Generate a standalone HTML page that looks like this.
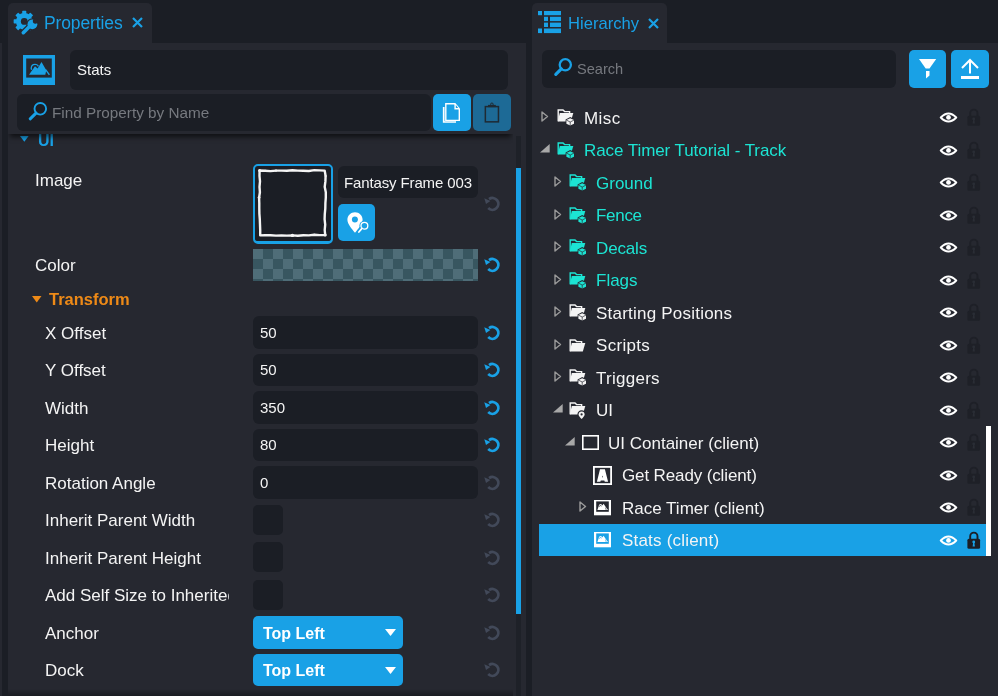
<!DOCTYPE html>
<html><head><meta charset="utf-8">
<style>
*{box-sizing:border-box;margin:0;padding:0}
html,body{width:998px;height:696px;overflow:hidden;background:#1b1e25;font-family:"Liberation Sans",sans-serif;color:#f4f4f4}
.a{position:absolute}
.t{position:absolute;white-space:nowrap;will-change:transform}
svg{overflow:visible}
</style></head><body>
<div class="a" style="left:0px;top:43px;width:1.5px;height:653px;background:#262830;border-radius:0px;"></div>
<div class="a" style="left:8px;top:3px;width:144px;height:41px;background:#262830;border-radius:0px;border-radius:5px 5px 0 0"></div>
<div class="a" style="left:8px;top:43px;width:518px;height:653px;background:#262830;border-radius:0px;"></div>
<svg class="a" style="left:20px;top:136.4px;" width="8.6" height="5.8" viewBox="0 0 8.6 5.8"><path d="M0 0 H8.6 L4.3 5.8 Z" fill="#19a1e6"/></svg>
<div class="t" style="left:37.8px;top:131.02px;font-size:16px;line-height:19px;color:#19a1e6;font-weight:700;">UI</div>
<div class="t" style="left:35px;top:170.52px;font-size:17px;line-height:20px;color:#f4f4f4;font-weight:400;">Image</div>
<div class="a" style="left:253px;top:164px;width:80px;height:80px;background:#1b1e25;border-radius:5px;border:2px solid #19a1e6;border-bottom-width:3px"></div>
<svg class="a" style="left:258px;top:169px;" width="70" height="69" viewBox="0 0 70 69"><path d="M1.6 1.5 L7.1 1.7 L12.5 2.1 L18.0 1.6 L23.5 1.6 L28.9 1.7 L34.4 1.2 L39.9 1.6 L45.3 1.8 L50.8 2.0 L56.3 1.1 L61.7 1.4 L66.7 1.6 L67.6 7.0 L67.4 12.4 L66.7 17.8 L67.8 23.2 L67.8 28.6 L67.4 34.0 L67.3 39.4 L66.8 44.8 L66.6 50.2 L67.2 55.6 L66.7 61.0 L67.2 66.0 L61.7 66.1 L56.3 65.8 L50.8 66.4 L45.3 66.3 L39.9 66.8 L34.4 66.4 L28.9 66.6 L23.5 66.4 L18.0 66.6 L12.5 66.3 L7.1 66.1 L2.2 66.4 L2.2 61.0 L2.0 55.6 L1.8 50.2 L1.4 44.8 L1.3 39.4 L1.3 34.0 L1.1 28.6 L1.9 23.2 L1.5 17.8 L2.0 12.4 L1.5 7.0 Z" fill="none" stroke="#f4f4f4" stroke-width="2.4" stroke-linejoin="round"/><circle cx="7.1" cy="1.7" r="1.0" fill="#f4f4f4"/><circle cx="1.1" cy="28.6" r="1.4" fill="#f4f4f4"/><circle cx="1.6" cy="1.5" r="1.5" fill="#f4f4f4"/><circle cx="67.6" cy="7.0" r="1.1" fill="#f4f4f4"/><circle cx="1.9" cy="23.2" r="1.0" fill="#f4f4f4"/><circle cx="18.0" cy="1.6" r="1.2" fill="#f4f4f4"/><circle cx="34.4" cy="66.4" r="1.7" fill="#f4f4f4"/><circle cx="67.2" cy="66.0" r="1.5" fill="#f4f4f4"/><circle cx="61.7" cy="66.1" r="1.0" fill="#f4f4f4"/><circle cx="56.3" cy="65.8" r="1.1" fill="#f4f4f4"/></svg>
<div class="a" style="left:338px;top:166px;width:140px;height:32px;background:#1b1e25;border-radius:6px;"></div>
<div class="t" style="left:344px;top:173.52px;font-size:15px;line-height:18px;color:#f4f4f4;font-weight:400;letter-spacing:-0.13px">Fantasy Frame 003</div>
<div class="a" style="left:338px;top:204px;width:37px;height:37px;background:#19a1e6;border-radius:5px;"></div>
<svg class="a" style="left:338px;top:204px;" width="37" height="37" viewBox="0 0 37 37"><path d="M17 8.3 C12.8 8.3 9.4 11.6 9.4 15.8 C9.4 20 13.6 24.6 17 28.8 C20.4 24.6 24.6 20 24.6 15.8 C24.6 11.6 21.2 8.3 17 8.3 Z" fill="#fff"/><circle cx="16.9" cy="15.5" r="3" fill="#19a1e6"/><circle cx="26.4" cy="21.8" r="5" fill="#19a1e6"/><circle cx="26.4" cy="21.8" r="3.4" fill="none" stroke="#fff" stroke-width="1.3"/><path d="M24 24.4 L20.6 28.3" stroke="#19a1e6" stroke-width="3.4"/><path d="M24 24.4 L20.9 28" stroke="#fff" stroke-width="1.7" stroke-linecap="round"/></svg>
<svg class="a" style="left:484.3px;top:196px;" width="16" height="16" viewBox="0 0 16 16"><path d="M4.23 12.07 A5.9 5.9 0 1 0 5.02 3.07" fill="none" stroke="#424959" stroke-width="2.8"/><path d="M0.3 2.3 L6.4 4.9 L2.0 7.9 Z" fill="#424959"/></svg>
<div class="t" style="left:35px;top:255.52px;font-size:17px;line-height:20px;color:#f4f4f4;font-weight:400;">Color</div>
<div class="a" style="left:253px;top:249px;width:225px;height:32px;background:repeating-conic-gradient(#385660 0% 25%, #4f6d78 0% 50%) 0 0/20px 20px;border-radius:0px;"></div>
<svg class="a" style="left:484.3px;top:256.7px;" width="16" height="16" viewBox="0 0 16 16"><path d="M4.23 12.07 A5.9 5.9 0 1 0 5.02 3.07" fill="none" stroke="#19a1e6" stroke-width="2.8"/><path d="M0.3 2.3 L6.4 4.9 L2.0 7.9 Z" fill="#19a1e6"/></svg>
<svg class="a" style="left:32px;top:296px;" width="9.5" height="6.5" viewBox="0 0 9.5 6.5"><path d="M0 0 H9.5 L4.75 6.5 Z" fill="#ee8a17"/></svg>
<div class="t" style="left:48.5px;top:289.02px;font-size:16.5px;line-height:20px;color:#ee8a17;font-weight:700;">Transform</div>
<div class="a" style="left:253px;top:316.0px;width:225px;height:32.5px;background:#1b1e25;border-radius:6px;"></div>
<div class="t" style="left:260px;top:323.52px;font-size:15px;line-height:18px;color:#f4f4f4;font-weight:400;">50</div>
<svg class="a" style="left:484.3px;top:324.5px;" width="16" height="16" viewBox="0 0 16 16"><path d="M4.23 12.07 A5.9 5.9 0 1 0 5.02 3.07" fill="none" stroke="#19a1e6" stroke-width="2.8"/><path d="M0.3 2.3 L6.4 4.9 L2.0 7.9 Z" fill="#19a1e6"/></svg>
<div class="a" style="left:253px;top:353.5px;width:225px;height:32.5px;background:#1b1e25;border-radius:6px;"></div>
<div class="t" style="left:260px;top:360.52px;font-size:15px;line-height:18px;color:#f4f4f4;font-weight:400;">50</div>
<svg class="a" style="left:484.3px;top:362.0px;" width="16" height="16" viewBox="0 0 16 16"><path d="M4.23 12.07 A5.9 5.9 0 1 0 5.02 3.07" fill="none" stroke="#19a1e6" stroke-width="2.8"/><path d="M0.3 2.3 L6.4 4.9 L2.0 7.9 Z" fill="#19a1e6"/></svg>
<div class="a" style="left:253px;top:391.0px;width:225px;height:32.5px;background:#1b1e25;border-radius:6px;"></div>
<div class="t" style="left:260px;top:398.52px;font-size:15px;line-height:18px;color:#f4f4f4;font-weight:400;">350</div>
<svg class="a" style="left:484.3px;top:399.5px;" width="16" height="16" viewBox="0 0 16 16"><path d="M4.23 12.07 A5.9 5.9 0 1 0 5.02 3.07" fill="none" stroke="#19a1e6" stroke-width="2.8"/><path d="M0.3 2.3 L6.4 4.9 L2.0 7.9 Z" fill="#19a1e6"/></svg>
<div class="a" style="left:253px;top:428.5px;width:225px;height:32.5px;background:#1b1e25;border-radius:6px;"></div>
<div class="t" style="left:260px;top:435.52px;font-size:15px;line-height:18px;color:#f4f4f4;font-weight:400;">80</div>
<svg class="a" style="left:484.3px;top:437.0px;" width="16" height="16" viewBox="0 0 16 16"><path d="M4.23 12.07 A5.9 5.9 0 1 0 5.02 3.07" fill="none" stroke="#19a1e6" stroke-width="2.8"/><path d="M0.3 2.3 L6.4 4.9 L2.0 7.9 Z" fill="#19a1e6"/></svg>
<div class="a" style="left:253px;top:466.0px;width:225px;height:32.5px;background:#1b1e25;border-radius:6px;"></div>
<div class="t" style="left:260px;top:473.52px;font-size:15px;line-height:18px;color:#f4f4f4;font-weight:400;">0</div>
<svg class="a" style="left:484.3px;top:474.5px;" width="16" height="16" viewBox="0 0 16 16"><path d="M4.23 12.07 A5.9 5.9 0 1 0 5.02 3.07" fill="none" stroke="#424959" stroke-width="2.8"/><path d="M0.3 2.3 L6.4 4.9 L2.0 7.9 Z" fill="#424959"/></svg>
<div class="a" style="left:253px;top:504.5px;width:30px;height:30px;background:#1b1e25;border-radius:5px;"></div>
<svg class="a" style="left:484.3px;top:512.0px;" width="16" height="16" viewBox="0 0 16 16"><path d="M4.23 12.07 A5.9 5.9 0 1 0 5.02 3.07" fill="none" stroke="#424959" stroke-width="2.8"/><path d="M0.3 2.3 L6.4 4.9 L2.0 7.9 Z" fill="#424959"/></svg>
<div class="a" style="left:253px;top:542.0px;width:30px;height:30px;background:#1b1e25;border-radius:5px;"></div>
<svg class="a" style="left:484.3px;top:549.5px;" width="16" height="16" viewBox="0 0 16 16"><path d="M4.23 12.07 A5.9 5.9 0 1 0 5.02 3.07" fill="none" stroke="#424959" stroke-width="2.8"/><path d="M0.3 2.3 L6.4 4.9 L2.0 7.9 Z" fill="#424959"/></svg>
<div class="a" style="left:253px;top:579.5px;width:30px;height:30px;background:#1b1e25;border-radius:5px;"></div>
<svg class="a" style="left:484.3px;top:587.0px;" width="16" height="16" viewBox="0 0 16 16"><path d="M4.23 12.07 A5.9 5.9 0 1 0 5.02 3.07" fill="none" stroke="#424959" stroke-width="2.8"/><path d="M0.3 2.3 L6.4 4.9 L2.0 7.9 Z" fill="#424959"/></svg>
<div class="a" style="left:253px;top:616.0px;width:150px;height:32.5px;background:#19a1e6;border-radius:5px;"></div>
<div class="t" style="left:262.5px;top:624.02px;font-size:16px;line-height:19px;color:#ffffff;font-weight:700;">Top Left</div>
<svg class="a" style="left:385px;top:629.0px;" width="11" height="7" viewBox="0 0 11 7"><path d="M0 0 H11 L5.5 7 Z" fill="#fff"/></svg>
<svg class="a" style="left:484.3px;top:624.5px;" width="16" height="16" viewBox="0 0 16 16"><path d="M4.23 12.07 A5.9 5.9 0 1 0 5.02 3.07" fill="none" stroke="#424959" stroke-width="2.8"/><path d="M0.3 2.3 L6.4 4.9 L2.0 7.9 Z" fill="#424959"/></svg>
<div class="a" style="left:253px;top:653.5px;width:150px;height:32.5px;background:#19a1e6;border-radius:5px;"></div>
<div class="t" style="left:262.5px;top:661.02px;font-size:16px;line-height:19px;color:#ffffff;font-weight:700;">Top Left</div>
<svg class="a" style="left:385px;top:666.5px;" width="11" height="7" viewBox="0 0 11 7"><path d="M0 0 H11 L5.5 7 Z" fill="#fff"/></svg>
<svg class="a" style="left:484.3px;top:662.0px;" width="16" height="16" viewBox="0 0 16 16"><path d="M4.23 12.07 A5.9 5.9 0 1 0 5.02 3.07" fill="none" stroke="#424959" stroke-width="2.8"/><path d="M0.3 2.3 L6.4 4.9 L2.0 7.9 Z" fill="#424959"/></svg>
<div class="t" style="left:45px;top:323.52px;font-size:17px;line-height:20px;color:#f4f4f4;font-weight:400;width:184px;overflow:hidden">X Offset</div>
<div class="t" style="left:45px;top:360.52px;font-size:17px;line-height:20px;color:#f4f4f4;font-weight:400;width:184px;overflow:hidden">Y Offset</div>
<div class="t" style="left:45px;top:398.52px;font-size:17px;line-height:20px;color:#f4f4f4;font-weight:400;width:184px;overflow:hidden">Width</div>
<div class="t" style="left:45px;top:435.52px;font-size:17px;line-height:20px;color:#f4f4f4;font-weight:400;width:184px;overflow:hidden">Height</div>
<div class="t" style="left:45px;top:473.52px;font-size:17px;line-height:20px;color:#f4f4f4;font-weight:400;width:184px;overflow:hidden">Rotation Angle</div>
<div class="t" style="left:45px;top:510.52px;font-size:17px;line-height:20px;color:#f4f4f4;font-weight:400;width:184px;overflow:hidden">Inherit Parent Width</div>
<div class="t" style="left:45px;top:548.52px;font-size:17px;line-height:20px;color:#f4f4f4;font-weight:400;width:184px;overflow:hidden">Inherit Parent Height</div>
<div class="t" style="left:45px;top:585.52px;font-size:17px;line-height:20px;color:#f4f4f4;font-weight:400;width:184px;overflow:hidden">Add Self Size to Inherited</div>
<div class="t" style="left:45px;top:623.52px;font-size:17px;line-height:20px;color:#f4f4f4;font-weight:400;width:184px;overflow:hidden">Anchor</div>
<div class="t" style="left:45px;top:660.52px;font-size:17px;line-height:20px;color:#f4f4f4;font-weight:400;width:184px;overflow:hidden">Dock</div>
<div class="a" style="left:8px;top:43px;width:505px;height:90.5px;background:#262830;border-radius:0px;box-shadow:0 5px 5px -2px rgba(0,0,0,0.6);clip-path:inset(0 0 -10px 0)"></div>
<svg class="a" style="left:10px;top:6px;" width="32" height="32" viewBox="0 0 32 32"><g fill="#19a1e6"><rect x="12.2" y="4.8" width="4.1" height="4" rx="0.6" transform="rotate(0 14.25 15.4)"/><rect x="12.2" y="4.8" width="4.1" height="4" rx="0.6" transform="rotate(45 14.25 15.4)"/><rect x="12.2" y="4.8" width="4.1" height="4" rx="0.6" transform="rotate(90 14.25 15.4)"/><rect x="12.2" y="4.8" width="4.1" height="4" rx="0.6" transform="rotate(135 14.25 15.4)"/><rect x="12.2" y="4.8" width="4.1" height="4" rx="0.6" transform="rotate(180 14.25 15.4)"/><rect x="12.2" y="4.8" width="4.1" height="4" rx="0.6" transform="rotate(225 14.25 15.4)"/><rect x="12.2" y="4.8" width="4.1" height="4" rx="0.6" transform="rotate(270 14.25 15.4)"/><rect x="12.2" y="4.8" width="4.1" height="4" rx="0.6" transform="rotate(315 14.25 15.4)"/><circle cx="14.25" cy="15.4" r="8.3"/></g><circle cx="14.25" cy="15.4" r="3.4" fill="#262830"/><path d="M13.3 26.7 L21 19" stroke="#262830" stroke-width="6" stroke-linecap="round"/><circle cx="22.4" cy="18.3" r="6.1" fill="#262830"/><path d="M13.3 26.7 L21 19" stroke="#19a1e6" stroke-width="3.6" stroke-linecap="round"/><circle cx="22.4" cy="18.3" r="4.9" fill="#19a1e6"/><circle cx="25.4" cy="15.1" r="2.6" fill="#262830"/></svg>
<div class="t" style="left:43.8px;top:12.52px;font-size:17.5px;line-height:21px;color:#19a1e6;font-weight:400;letter-spacing:-0.12px">Properties</div>
<svg class="a" style="left:132px;top:17px;" width="11" height="11" viewBox="0 0 11 11"><path d="M1 1 L10 10 M10 1 L1 10" stroke="#19a1e6" stroke-width="2.2"/></svg>
<svg class="a" style="left:23px;top:55px;" width="32" height="30" viewBox="0 0 32 30"><rect x="0" y="0" width="32" height="30" fill="#19a1e6"/><rect x="3.2" y="3.5" width="25.6" height="19.1" fill="#262830"/><path d="M6 19.7 L12 11.2 L14.6 13.5 L18.5 7.1 L23.3 15.2 L22.3 19.7 Z" fill="#19a1e6"/><path d="M22.6 14.6 L26.4 19.8" stroke="#19a1e6" stroke-width="1.4"/><path d="M8.6 14.8 A3.6 3.6 0 1 1 15.4 11.4" fill="none" stroke="#19a1e6" stroke-width="1.3"/></svg>
<div class="a" style="left:70px;top:50px;width:438px;height:40px;background:#1b1e25;border-radius:6px;"></div>
<div class="t" style="left:77px;top:60.52px;font-size:15px;line-height:18px;color:#f4f4f4;font-weight:400;">Stats</div>
<div class="a" style="left:17px;top:94px;width:414px;height:37px;background:#1b1e25;border-radius:6px;"></div>
<svg class="a" style="left:28px;top:102px;" width="20" height="20" viewBox="0 0 20 20"><circle cx="12.3" cy="6.8" r="5.8" fill="none" stroke="#19a1e6" stroke-width="1.9"/><path d="M8 11.2 L2.2 16.8" stroke="#19a1e6" stroke-width="3" stroke-linecap="round"/></svg>
<div class="t" style="left:52px;top:103.52px;font-size:15.3px;line-height:18px;color:#76797f;font-weight:400;">Find Property by Name</div>
<div class="a" style="left:433px;top:94px;width:38px;height:37px;background:#19a1e6;border-radius:5px;"></div>
<svg class="a" style="left:442px;top:103px;" width="19" height="21" viewBox="0 0 19 21"><path d="M1.7 4 V19 H14" fill="none" stroke="#fff" stroke-width="1.7"/><path d="M3.1 0 H13.3 L18 5.5 V18.1 H3.1 Z" fill="#fff"/><path d="M4.5 1.4 H12.4 V6.4 H16.6 V16.7 H4.5 Z" fill="#19a1e6"/><path d="M13.8 1.9 L16.3 5 H13.8 Z" fill="#19a1e6"/></svg>
<div class="a" style="left:473px;top:94px;width:38px;height:37px;background:#1d6a96;border-radius:5px;"></div>
<svg class="a" style="left:484px;top:103px;" width="16" height="20" viewBox="0 0 16 20"><rect x="1.35" y="3.6" width="13.1" height="15.25" fill="none" stroke="#1f2a33" stroke-width="1.5"/><path d="M4 4.1 H11.8 V1.9 H4 Z" fill="#1f2a33"/><circle cx="7.9" cy="1.3" r="1.3" fill="none" stroke="#1f2a33" stroke-width="1"/></svg>
<div class="a" style="left:516px;top:136px;width:5px;height:560px;background:#1e2128;border-radius:0px;"></div>
<div class="a" style="left:516px;top:168px;width:5px;height:446px;background:#19a1e6;border-radius:0px;"></div>
<div class="a" style="left:8px;top:689px;width:505px;height:7px;background:linear-gradient(rgba(0,0,0,0),rgba(0,0,0,0.3));border-radius:0px;"></div>
<div class="a" style="left:532px;top:3px;width:135px;height:41px;background:#262830;border-radius:0px;border-radius:5px 5px 0 0"></div>
<div class="a" style="left:532px;top:43px;width:466px;height:653px;background:#262830;border-radius:0px;"></div>
<svg class="a" style="left:538px;top:11.1px;" width="23" height="22.1" viewBox="0 0 23 22.1"><g fill="#19a1e6"><rect x="0" y="0" width="4" height="4.2"/><rect x="6" y="0" width="17" height="4.2"/><rect x="6" y="5.8" width="4" height="4.3"/><rect x="12" y="5.8" width="11" height="4.3"/><rect x="6" y="11.6" width="4" height="4.4"/><rect x="12" y="11.6" width="11" height="4.4"/><rect x="0" y="17.5" width="4" height="4.6"/><rect x="6" y="17.5" width="17" height="4.6"/></g></svg>
<div class="t" style="left:568.2px;top:13.52px;font-size:16.6px;line-height:20px;color:#19a1e6;font-weight:400;">Hierarchy</div>
<svg class="a" style="left:648px;top:17.5px;" width="11" height="11" viewBox="0 0 11 11"><path d="M1 1 L10 10 M10 1 L1 10" stroke="#19a1e6" stroke-width="2.2"/></svg>
<div class="a" style="left:542px;top:50px;width:354px;height:38px;background:#1b1e25;border-radius:6px;"></div>
<svg class="a" style="left:552px;top:58px;" width="20" height="20" viewBox="0 0 20 20"><circle cx="13.3" cy="6.8" r="5.6" fill="none" stroke="#19a1e6" stroke-width="2.3"/><path d="M9.3 10.9 L3.8 16.4" stroke="#19a1e6" stroke-width="3.2" stroke-linecap="round"/></svg>
<div class="t" style="left:577.3px;top:60.02px;font-size:14.6px;line-height:18px;color:#76797f;font-weight:400;">Search</div>
<div class="a" style="left:909px;top:50px;width:37px;height:38px;background:#19a1e6;border-radius:5px;"></div>
<svg class="a" style="left:918px;top:58px;" width="19" height="21" viewBox="0 0 19 21"><path d="M1 1 H18.2 L11.5 10.6 H7.7 Z" fill="#fff"/><path d="M8 13 H11.5 V17.5 L8 20.5 Z" fill="#fff"/></svg>
<div class="a" style="left:951px;top:50px;width:38px;height:38px;background:#19a1e6;border-radius:5px;"></div>
<svg class="a" style="left:960px;top:58px;" width="20" height="22" viewBox="0 0 20 22"><path d="M2 10 L10 2 L18 10" fill="none" stroke="#fff" stroke-width="2"/><path d="M10 2 V15.5" stroke="#fff" stroke-width="2"/><rect x="1" y="18" width="18" height="3" fill="#fff"/></svg>
<div class="a" style="left:539px;top:524px;width:447px;height:32px;background:#19a1e6;border-radius:0px;"></div>
<div class="a" style="left:986px;top:426px;width:5px;height:130px;background:#ffffff;border-radius:0px;"></div>
<svg class="a" style="left:541.3px;top:111.45px;" width="8" height="11" viewBox="0 0 8 11"><path d="M1 1 L6.5 5.5 L1 10 Z" fill="none" stroke="#9a9a9a" stroke-width="1.4" stroke-linejoin="round"/></svg>
<svg class="a" style="left:556.8px;top:109.25px;" width="19" height="19" viewBox="0 0 19 19"><path d="M1.2 12.3 V1 H6 L7.6 2.6 H12.6 V4" fill="none" stroke="#f4f4f4" stroke-width="1.4"/><path d="M2.8 4 H16.3 L13.8 12.5 H0.8 Z" fill="#f4f4f4"/><path d="M13.2 8 L17.8 10.4 V15.2 L13.2 17.6 L8.6 15.2 V10.4 Z" fill="#262830"/><path d="M13.2 9.2 L17 11.1 V14.8 L13.2 16.6 L9.4 14.8 V11.1 Z" fill="#f4f4f4"/><path d="M9.4 11.1 L13.2 13 L17 11.1 M13.2 13 V16.6" fill="none" stroke="#262830" stroke-width="0.7"/></svg>
<div class="t" style="left:583.5px;top:108.52px;font-size:17px;line-height:20px;color:#f4f4f4;font-weight:400;letter-spacing:0.4px">Misc</div>
<svg class="a" style="left:940px;top:112.25px;" width="17" height="11" viewBox="0 0 17 11"><path d="M0.8 5.5 Q8.5 -2.6 16.2 5.5 Q8.5 13.6 0.8 5.5 Z" fill="none" stroke="#fff" stroke-width="2.1" stroke-linejoin="round"/><circle cx="8.5" cy="5.4" r="2.4" fill="#fff"/></svg>
<svg class="a" style="left:966.7px;top:108.15px;" width="14" height="17" viewBox="0 0 14 17"><path d="M3.2 8 V5.3 a3.65 3.65 0 0 1 7.3 0 V8" fill="none" stroke="#1e2027" stroke-width="1.9"/><rect x="0.4" y="7.65" width="12.7" height="10" rx="1.5" fill="#1e2027"/><circle cx="6.75" cy="10.9" r="1.4" fill="#2a2d35"/><path d="M6.2 11 H7.3 L7.9 15.4 H5.6 Z" fill="#2a2d35"/></svg>
<svg class="a" style="left:540.2px;top:144.2px;" width="10" height="9" viewBox="0 0 10 9"><path d="M9.7 0 V8.6 H0 Z" fill="#a8a8a8"/></svg>
<svg class="a" style="left:556.8px;top:141.75px;" width="19" height="19" viewBox="0 0 19 19"><path d="M1.2 12.3 V1 H6 L7.6 2.6 H12.6 V4" fill="none" stroke="#1ce4d3" stroke-width="1.4"/><path d="M2.8 4 H16.3 L13.8 12.5 H0.8 Z" fill="#1ce4d3"/><path d="M13.2 8 L17.8 10.4 V15.2 L13.2 17.6 L8.6 15.2 V10.4 Z" fill="#262830"/><path d="M13.2 9.2 L17 11.1 V14.8 L13.2 16.6 L9.4 14.8 V11.1 Z" fill="#1ce4d3"/><path d="M9.4 11.1 L13.2 13 L17 11.1 M13.2 13 V16.6" fill="none" stroke="#262830" stroke-width="0.7"/></svg>
<div class="t" style="left:583.5px;top:140.52px;font-size:17px;line-height:20px;color:#1ce4d3;font-weight:400;letter-spacing:-0.07px">Race Timer Tutorial - Track</div>
<svg class="a" style="left:940px;top:144.75px;" width="17" height="11" viewBox="0 0 17 11"><path d="M0.8 5.5 Q8.5 -2.6 16.2 5.5 Q8.5 13.6 0.8 5.5 Z" fill="none" stroke="#fff" stroke-width="2.1" stroke-linejoin="round"/><circle cx="8.5" cy="5.4" r="2.4" fill="#fff"/></svg>
<svg class="a" style="left:966.7px;top:140.65px;" width="14" height="17" viewBox="0 0 14 17"><path d="M3.2 8 V5.3 a3.65 3.65 0 0 1 7.3 0 V8" fill="none" stroke="#1e2027" stroke-width="1.9"/><rect x="0.4" y="7.65" width="12.7" height="10" rx="1.5" fill="#1e2027"/><circle cx="6.75" cy="10.9" r="1.4" fill="#2a2d35"/><path d="M6.2 11 H7.3 L7.9 15.4 H5.6 Z" fill="#2a2d35"/></svg>
<svg class="a" style="left:553.8px;top:176.45px;" width="8" height="11" viewBox="0 0 8 11"><path d="M1 1 L6.5 5.5 L1 10 Z" fill="none" stroke="#9a9a9a" stroke-width="1.4" stroke-linejoin="round"/></svg>
<svg class="a" style="left:569.3px;top:174.25px;" width="19" height="19" viewBox="0 0 19 19"><path d="M1.2 12.3 V1 H6 L7.6 2.6 H12.6 V4" fill="none" stroke="#1ce4d3" stroke-width="1.4"/><path d="M2.8 4 H16.3 L13.8 12.5 H0.8 Z" fill="#1ce4d3"/><path d="M13.2 8 L17.8 10.4 V15.2 L13.2 17.6 L8.6 15.2 V10.4 Z" fill="#262830"/><path d="M13.2 9.2 L17 11.1 V14.8 L13.2 16.6 L9.4 14.8 V11.1 Z" fill="#1ce4d3"/><path d="M9.4 11.1 L13.2 13 L17 11.1 M13.2 13 V16.6" fill="none" stroke="#262830" stroke-width="0.7"/></svg>
<div class="t" style="left:596.3px;top:173.52px;font-size:17px;line-height:20px;color:#1ce4d3;font-weight:400;letter-spacing:0px">Ground</div>
<svg class="a" style="left:940px;top:177.25px;" width="17" height="11" viewBox="0 0 17 11"><path d="M0.8 5.5 Q8.5 -2.6 16.2 5.5 Q8.5 13.6 0.8 5.5 Z" fill="none" stroke="#fff" stroke-width="2.1" stroke-linejoin="round"/><circle cx="8.5" cy="5.4" r="2.4" fill="#fff"/></svg>
<svg class="a" style="left:966.7px;top:173.15px;" width="14" height="17" viewBox="0 0 14 17"><path d="M3.2 8 V5.3 a3.65 3.65 0 0 1 7.3 0 V8" fill="none" stroke="#1e2027" stroke-width="1.9"/><rect x="0.4" y="7.65" width="12.7" height="10" rx="1.5" fill="#1e2027"/><circle cx="6.75" cy="10.9" r="1.4" fill="#2a2d35"/><path d="M6.2 11 H7.3 L7.9 15.4 H5.6 Z" fill="#2a2d35"/></svg>
<svg class="a" style="left:553.8px;top:208.95px;" width="8" height="11" viewBox="0 0 8 11"><path d="M1 1 L6.5 5.5 L1 10 Z" fill="none" stroke="#9a9a9a" stroke-width="1.4" stroke-linejoin="round"/></svg>
<svg class="a" style="left:569.3px;top:206.75px;" width="19" height="19" viewBox="0 0 19 19"><path d="M1.2 12.3 V1 H6 L7.6 2.6 H12.6 V4" fill="none" stroke="#1ce4d3" stroke-width="1.4"/><path d="M2.8 4 H16.3 L13.8 12.5 H0.8 Z" fill="#1ce4d3"/><path d="M13.2 8 L17.8 10.4 V15.2 L13.2 17.6 L8.6 15.2 V10.4 Z" fill="#262830"/><path d="M13.2 9.2 L17 11.1 V14.8 L13.2 16.6 L9.4 14.8 V11.1 Z" fill="#1ce4d3"/><path d="M9.4 11.1 L13.2 13 L17 11.1 M13.2 13 V16.6" fill="none" stroke="#262830" stroke-width="0.7"/></svg>
<div class="t" style="left:596.3px;top:205.52px;font-size:17px;line-height:20px;color:#1ce4d3;font-weight:400;letter-spacing:-0.3px">Fence</div>
<svg class="a" style="left:940px;top:209.75px;" width="17" height="11" viewBox="0 0 17 11"><path d="M0.8 5.5 Q8.5 -2.6 16.2 5.5 Q8.5 13.6 0.8 5.5 Z" fill="none" stroke="#fff" stroke-width="2.1" stroke-linejoin="round"/><circle cx="8.5" cy="5.4" r="2.4" fill="#fff"/></svg>
<svg class="a" style="left:966.7px;top:205.65px;" width="14" height="17" viewBox="0 0 14 17"><path d="M3.2 8 V5.3 a3.65 3.65 0 0 1 7.3 0 V8" fill="none" stroke="#1e2027" stroke-width="1.9"/><rect x="0.4" y="7.65" width="12.7" height="10" rx="1.5" fill="#1e2027"/><circle cx="6.75" cy="10.9" r="1.4" fill="#2a2d35"/><path d="M6.2 11 H7.3 L7.9 15.4 H5.6 Z" fill="#2a2d35"/></svg>
<svg class="a" style="left:553.8px;top:241.45px;" width="8" height="11" viewBox="0 0 8 11"><path d="M1 1 L6.5 5.5 L1 10 Z" fill="none" stroke="#9a9a9a" stroke-width="1.4" stroke-linejoin="round"/></svg>
<svg class="a" style="left:569.3px;top:239.25px;" width="19" height="19" viewBox="0 0 19 19"><path d="M1.2 12.3 V1 H6 L7.6 2.6 H12.6 V4" fill="none" stroke="#1ce4d3" stroke-width="1.4"/><path d="M2.8 4 H16.3 L13.8 12.5 H0.8 Z" fill="#1ce4d3"/><path d="M13.2 8 L17.8 10.4 V15.2 L13.2 17.6 L8.6 15.2 V10.4 Z" fill="#262830"/><path d="M13.2 9.2 L17 11.1 V14.8 L13.2 16.6 L9.4 14.8 V11.1 Z" fill="#1ce4d3"/><path d="M9.4 11.1 L13.2 13 L17 11.1 M13.2 13 V16.6" fill="none" stroke="#262830" stroke-width="0.7"/></svg>
<div class="t" style="left:596.3px;top:238.52px;font-size:17px;line-height:20px;color:#1ce4d3;font-weight:400;letter-spacing:-0.15px">Decals</div>
<svg class="a" style="left:940px;top:242.25px;" width="17" height="11" viewBox="0 0 17 11"><path d="M0.8 5.5 Q8.5 -2.6 16.2 5.5 Q8.5 13.6 0.8 5.5 Z" fill="none" stroke="#fff" stroke-width="2.1" stroke-linejoin="round"/><circle cx="8.5" cy="5.4" r="2.4" fill="#fff"/></svg>
<svg class="a" style="left:966.7px;top:238.15px;" width="14" height="17" viewBox="0 0 14 17"><path d="M3.2 8 V5.3 a3.65 3.65 0 0 1 7.3 0 V8" fill="none" stroke="#1e2027" stroke-width="1.9"/><rect x="0.4" y="7.65" width="12.7" height="10" rx="1.5" fill="#1e2027"/><circle cx="6.75" cy="10.9" r="1.4" fill="#2a2d35"/><path d="M6.2 11 H7.3 L7.9 15.4 H5.6 Z" fill="#2a2d35"/></svg>
<svg class="a" style="left:553.8px;top:273.95px;" width="8" height="11" viewBox="0 0 8 11"><path d="M1 1 L6.5 5.5 L1 10 Z" fill="none" stroke="#9a9a9a" stroke-width="1.4" stroke-linejoin="round"/></svg>
<svg class="a" style="left:569.3px;top:271.75px;" width="19" height="19" viewBox="0 0 19 19"><path d="M1.2 12.3 V1 H6 L7.6 2.6 H12.6 V4" fill="none" stroke="#1ce4d3" stroke-width="1.4"/><path d="M2.8 4 H16.3 L13.8 12.5 H0.8 Z" fill="#1ce4d3"/><path d="M13.2 8 L17.8 10.4 V15.2 L13.2 17.6 L8.6 15.2 V10.4 Z" fill="#262830"/><path d="M13.2 9.2 L17 11.1 V14.8 L13.2 16.6 L9.4 14.8 V11.1 Z" fill="#1ce4d3"/><path d="M9.4 11.1 L13.2 13 L17 11.1 M13.2 13 V16.6" fill="none" stroke="#262830" stroke-width="0.7"/></svg>
<div class="t" style="left:596.3px;top:270.52px;font-size:17px;line-height:20px;color:#1ce4d3;font-weight:400;letter-spacing:0px">Flags</div>
<svg class="a" style="left:940px;top:274.75px;" width="17" height="11" viewBox="0 0 17 11"><path d="M0.8 5.5 Q8.5 -2.6 16.2 5.5 Q8.5 13.6 0.8 5.5 Z" fill="none" stroke="#fff" stroke-width="2.1" stroke-linejoin="round"/><circle cx="8.5" cy="5.4" r="2.4" fill="#fff"/></svg>
<svg class="a" style="left:966.7px;top:270.65px;" width="14" height="17" viewBox="0 0 14 17"><path d="M3.2 8 V5.3 a3.65 3.65 0 0 1 7.3 0 V8" fill="none" stroke="#1e2027" stroke-width="1.9"/><rect x="0.4" y="7.65" width="12.7" height="10" rx="1.5" fill="#1e2027"/><circle cx="6.75" cy="10.9" r="1.4" fill="#2a2d35"/><path d="M6.2 11 H7.3 L7.9 15.4 H5.6 Z" fill="#2a2d35"/></svg>
<svg class="a" style="left:553.8px;top:306.45px;" width="8" height="11" viewBox="0 0 8 11"><path d="M1 1 L6.5 5.5 L1 10 Z" fill="none" stroke="#9a9a9a" stroke-width="1.4" stroke-linejoin="round"/></svg>
<svg class="a" style="left:569.3px;top:304.25px;" width="19" height="19" viewBox="0 0 19 19"><path d="M1.2 12.3 V1 H6 L7.6 2.6 H12.6 V4" fill="none" stroke="#f4f4f4" stroke-width="1.4"/><path d="M2.8 4 H16.3 L13.8 12.5 H0.8 Z" fill="#f4f4f4"/><path d="M13.2 8 L17.8 10.4 V15.2 L13.2 17.6 L8.6 15.2 V10.4 Z" fill="#262830"/><path d="M13.2 9.2 L17 11.1 V14.8 L13.2 16.6 L9.4 14.8 V11.1 Z" fill="#f4f4f4"/><path d="M9.4 11.1 L13.2 13 L17 11.1 M13.2 13 V16.6" fill="none" stroke="#262830" stroke-width="0.7"/></svg>
<div class="t" style="left:596.3px;top:303.52px;font-size:17px;line-height:20px;color:#f4f4f4;font-weight:400;letter-spacing:0.22px">Starting Positions</div>
<svg class="a" style="left:940px;top:307.25px;" width="17" height="11" viewBox="0 0 17 11"><path d="M0.8 5.5 Q8.5 -2.6 16.2 5.5 Q8.5 13.6 0.8 5.5 Z" fill="none" stroke="#fff" stroke-width="2.1" stroke-linejoin="round"/><circle cx="8.5" cy="5.4" r="2.4" fill="#fff"/></svg>
<svg class="a" style="left:966.7px;top:303.15px;" width="14" height="17" viewBox="0 0 14 17"><path d="M3.2 8 V5.3 a3.65 3.65 0 0 1 7.3 0 V8" fill="none" stroke="#1e2027" stroke-width="1.9"/><rect x="0.4" y="7.65" width="12.7" height="10" rx="1.5" fill="#1e2027"/><circle cx="6.75" cy="10.9" r="1.4" fill="#2a2d35"/><path d="M6.2 11 H7.3 L7.9 15.4 H5.6 Z" fill="#2a2d35"/></svg>
<svg class="a" style="left:553.8px;top:338.95px;" width="8" height="11" viewBox="0 0 8 11"><path d="M1 1 L6.5 5.5 L1 10 Z" fill="none" stroke="#9a9a9a" stroke-width="1.4" stroke-linejoin="round"/></svg>
<svg class="a" style="left:569.3px;top:338.75px;" width="19" height="19" viewBox="0 0 19 19"><path d="M1.2 12.3 V1 H6 L7.6 2.6 H12.6 V4" fill="none" stroke="#f4f4f4" stroke-width="1.4"/><path d="M2.8 4 H16.3 L13.8 12.5 H0.8 Z" fill="#f4f4f4"/></svg>
<div class="t" style="left:596.3px;top:335.52px;font-size:17px;line-height:20px;color:#f4f4f4;font-weight:400;letter-spacing:0.3px">Scripts</div>
<svg class="a" style="left:940px;top:339.75px;" width="17" height="11" viewBox="0 0 17 11"><path d="M0.8 5.5 Q8.5 -2.6 16.2 5.5 Q8.5 13.6 0.8 5.5 Z" fill="none" stroke="#fff" stroke-width="2.1" stroke-linejoin="round"/><circle cx="8.5" cy="5.4" r="2.4" fill="#fff"/></svg>
<svg class="a" style="left:966.7px;top:335.65px;" width="14" height="17" viewBox="0 0 14 17"><path d="M3.2 8 V5.3 a3.65 3.65 0 0 1 7.3 0 V8" fill="none" stroke="#1e2027" stroke-width="1.9"/><rect x="0.4" y="7.65" width="12.7" height="10" rx="1.5" fill="#1e2027"/><circle cx="6.75" cy="10.9" r="1.4" fill="#2a2d35"/><path d="M6.2 11 H7.3 L7.9 15.4 H5.6 Z" fill="#2a2d35"/></svg>
<svg class="a" style="left:553.8px;top:371.45px;" width="8" height="11" viewBox="0 0 8 11"><path d="M1 1 L6.5 5.5 L1 10 Z" fill="none" stroke="#9a9a9a" stroke-width="1.4" stroke-linejoin="round"/></svg>
<svg class="a" style="left:569.3px;top:369.25px;" width="19" height="19" viewBox="0 0 19 19"><path d="M1.2 12.3 V1 H6 L7.6 2.6 H12.6 V4" fill="none" stroke="#f4f4f4" stroke-width="1.4"/><path d="M2.8 4 H16.3 L13.8 12.5 H0.8 Z" fill="#f4f4f4"/><path d="M13.2 8 L17.8 10.4 V15.2 L13.2 17.6 L8.6 15.2 V10.4 Z" fill="#262830"/><path d="M13.2 9.2 L17 11.1 V14.8 L13.2 16.6 L9.4 14.8 V11.1 Z" fill="#f4f4f4"/><path d="M9.4 11.1 L13.2 13 L17 11.1 M13.2 13 V16.6" fill="none" stroke="#262830" stroke-width="0.7"/></svg>
<div class="t" style="left:596.3px;top:368.52px;font-size:17px;line-height:20px;color:#f4f4f4;font-weight:400;letter-spacing:0.27px">Triggers</div>
<svg class="a" style="left:940px;top:372.25px;" width="17" height="11" viewBox="0 0 17 11"><path d="M0.8 5.5 Q8.5 -2.6 16.2 5.5 Q8.5 13.6 0.8 5.5 Z" fill="none" stroke="#fff" stroke-width="2.1" stroke-linejoin="round"/><circle cx="8.5" cy="5.4" r="2.4" fill="#fff"/></svg>
<svg class="a" style="left:966.7px;top:368.15px;" width="14" height="17" viewBox="0 0 14 17"><path d="M3.2 8 V5.3 a3.65 3.65 0 0 1 7.3 0 V8" fill="none" stroke="#1e2027" stroke-width="1.9"/><rect x="0.4" y="7.65" width="12.7" height="10" rx="1.5" fill="#1e2027"/><circle cx="6.75" cy="10.9" r="1.4" fill="#2a2d35"/><path d="M6.2 11 H7.3 L7.9 15.4 H5.6 Z" fill="#2a2d35"/></svg>
<svg class="a" style="left:552.8000000000001px;top:404.2px;" width="10" height="9" viewBox="0 0 10 9"><path d="M9.7 0 V8.6 H0 Z" fill="#a8a8a8"/></svg>
<svg class="a" style="left:569.3px;top:401.75px;" width="19" height="19" viewBox="0 0 19 19"><path d="M1.2 12.3 V1 H6 L7.6 2.6 H12.6 V4" fill="none" stroke="#f4f4f4" stroke-width="1.4"/><path d="M2.8 4 H16.3 L13.8 12.5 H0.8 Z" fill="#f4f4f4"/><path d="M12.6 8.2 a4.2 4.2 0 0 1 4.2 4.2 c0 2 -2.5 4.5 -4.2 6 c-1.7-1.5 -4.2-4 -4.2-6 a4.2 4.2 0 0 1 4.2-4.2z" fill="#262830"/><path d="M12.6 9.4 a3 3 0 0 1 3 3 c0 1.5 -1.7 3.3 -3 4.5 c-1.3-1.2 -3-3 -3-4.5 a3 3 0 0 1 3-3z" fill="#f4f4f4"/><circle cx="12.6" cy="12.4" r="1.1" fill="#262830"/></svg>
<div class="t" style="left:596.3px;top:400.52px;font-size:17px;line-height:20px;color:#f4f4f4;font-weight:400;letter-spacing:0px">UI</div>
<svg class="a" style="left:940px;top:404.75px;" width="17" height="11" viewBox="0 0 17 11"><path d="M0.8 5.5 Q8.5 -2.6 16.2 5.5 Q8.5 13.6 0.8 5.5 Z" fill="none" stroke="#fff" stroke-width="2.1" stroke-linejoin="round"/><circle cx="8.5" cy="5.4" r="2.4" fill="#fff"/></svg>
<svg class="a" style="left:966.7px;top:400.65px;" width="14" height="17" viewBox="0 0 14 17"><path d="M3.2 8 V5.3 a3.65 3.65 0 0 1 7.3 0 V8" fill="none" stroke="#1e2027" stroke-width="1.9"/><rect x="0.4" y="7.65" width="12.7" height="10" rx="1.5" fill="#1e2027"/><circle cx="6.75" cy="10.9" r="1.4" fill="#2a2d35"/><path d="M6.2 11 H7.3 L7.9 15.4 H5.6 Z" fill="#2a2d35"/></svg>
<svg class="a" style="left:565.4000000000001px;top:436.7px;" width="10" height="9" viewBox="0 0 10 9"><path d="M9.7 0 V8.6 H0 Z" fill="#a8a8a8"/></svg>
<svg class="a" style="left:582px;top:435.25px;" width="17" height="15" viewBox="0 0 17 15"><rect x="0.8" y="0.8" width="15.4" height="13.4" fill="none" stroke="#fff" stroke-width="1.6"/></svg>
<div class="t" style="left:608.3px;top:433.52px;font-size:17px;line-height:20px;color:#f4f4f4;font-weight:400;letter-spacing:0px">UI Container (client)</div>
<svg class="a" style="left:940px;top:437.25px;" width="17" height="11" viewBox="0 0 17 11"><path d="M0.8 5.5 Q8.5 -2.6 16.2 5.5 Q8.5 13.6 0.8 5.5 Z" fill="none" stroke="#fff" stroke-width="2.1" stroke-linejoin="round"/><circle cx="8.5" cy="5.4" r="2.4" fill="#fff"/></svg>
<svg class="a" style="left:966.7px;top:433.15px;" width="14" height="17" viewBox="0 0 14 17"><path d="M3.2 8 V5.3 a3.65 3.65 0 0 1 7.3 0 V8" fill="none" stroke="#1e2027" stroke-width="1.9"/><rect x="0.4" y="7.65" width="12.7" height="10" rx="1.5" fill="#1e2027"/><circle cx="6.75" cy="10.9" r="1.4" fill="#2a2d35"/><path d="M6.2 11 H7.3 L7.9 15.4 H5.6 Z" fill="#2a2d35"/></svg>
<svg class="a" style="left:593px;top:465.75px;" width="19" height="19" viewBox="0 0 19 19"><rect x="0.9" y="0.9" width="17.2" height="17.2" fill="none" stroke="#fff" stroke-width="1.8"/><path d="M3.9 15.85 L7 3.15 H11.9 L15.1 15.85 H11.8 L11.3 14.4 H7.8 L7.3 15.85 Z M9 11.2 H10 L9.5 9.6 Z" fill="#fff" fill-rule="evenodd"/></svg>
<div class="t" style="left:621.5px;top:465.52px;font-size:17px;line-height:20px;color:#f4f4f4;font-weight:400;letter-spacing:-0.13px">Get Ready (client)</div>
<svg class="a" style="left:940px;top:469.75px;" width="17" height="11" viewBox="0 0 17 11"><path d="M0.8 5.5 Q8.5 -2.6 16.2 5.5 Q8.5 13.6 0.8 5.5 Z" fill="none" stroke="#fff" stroke-width="2.1" stroke-linejoin="round"/><circle cx="8.5" cy="5.4" r="2.4" fill="#fff"/></svg>
<svg class="a" style="left:966.7px;top:465.65px;" width="14" height="17" viewBox="0 0 14 17"><path d="M3.2 8 V5.3 a3.65 3.65 0 0 1 7.3 0 V8" fill="none" stroke="#1e2027" stroke-width="1.9"/><rect x="0.4" y="7.65" width="12.7" height="10" rx="1.5" fill="#1e2027"/><circle cx="6.75" cy="10.9" r="1.4" fill="#2a2d35"/><path d="M6.2 11 H7.3 L7.9 15.4 H5.6 Z" fill="#2a2d35"/></svg>
<svg class="a" style="left:578.8px;top:501.45px;" width="8" height="11" viewBox="0 0 8 11"><path d="M1 1 L6.5 5.5 L1 10 Z" fill="none" stroke="#9a9a9a" stroke-width="1.4" stroke-linejoin="round"/></svg>
<svg class="a" style="left:594px;top:499.9px;" width="17" height="15.3" viewBox="0 0 17 15.3"><rect x="0" y="0" width="17" height="15.3" fill="#fff"/><rect x="2.2" y="1.4" width="12.6" height="10.4" fill="#262830"/><path d="M3.4 10 L4.4 7 Q4.8 3.6 7.2 4.2 Q8.2 4.6 8.4 5.4 L9.6 3.7 L11.9 7.2 L14 10 Z" fill="#fff"/><path d="M5.2 6.6 A1.35 1.35 0 0 1 7.6 6.1" fill="none" stroke="#262830" stroke-width="0.8"/><path d="M11.5 7.6 L12.2 10" stroke="#262830" stroke-width="0.6"/></svg>
<div class="t" style="left:621.5px;top:498.52px;font-size:17px;line-height:20px;color:#f4f4f4;font-weight:400;letter-spacing:0px">Race Timer (client)</div>
<svg class="a" style="left:940px;top:502.25px;" width="17" height="11" viewBox="0 0 17 11"><path d="M0.8 5.5 Q8.5 -2.6 16.2 5.5 Q8.5 13.6 0.8 5.5 Z" fill="none" stroke="#fff" stroke-width="2.1" stroke-linejoin="round"/><circle cx="8.5" cy="5.4" r="2.4" fill="#fff"/></svg>
<svg class="a" style="left:966.7px;top:498.15px;" width="14" height="17" viewBox="0 0 14 17"><path d="M3.2 8 V5.3 a3.65 3.65 0 0 1 7.3 0 V8" fill="none" stroke="#1e2027" stroke-width="1.9"/><rect x="0.4" y="7.65" width="12.7" height="10" rx="1.5" fill="#1e2027"/><circle cx="6.75" cy="10.9" r="1.4" fill="#2a2d35"/><path d="M6.2 11 H7.3 L7.9 15.4 H5.6 Z" fill="#2a2d35"/></svg>
<svg class="a" style="left:594px;top:532.4px;" width="17" height="15.3" viewBox="0 0 17 15.3"><rect x="0" y="0" width="17" height="15.3" fill="#fff"/><rect x="2.2" y="1.4" width="12.6" height="10.4" fill="#19a1e6"/><path d="M3.4 10 L4.4 7 Q4.8 3.6 7.2 4.2 Q8.2 4.6 8.4 5.4 L9.6 3.7 L11.9 7.2 L14 10 Z" fill="#fff"/><path d="M5.2 6.6 A1.35 1.35 0 0 1 7.6 6.1" fill="none" stroke="#19a1e6" stroke-width="0.8"/><path d="M11.5 7.6 L12.2 10" stroke="#19a1e6" stroke-width="0.6"/></svg>
<div class="t" style="left:621.5px;top:530.52px;font-size:17px;line-height:20px;color:#f4f4f4;font-weight:400;letter-spacing:0.2px">Stats (client)</div>
<svg class="a" style="left:940px;top:534.75px;" width="17" height="11" viewBox="0 0 17 11"><path d="M0.8 5.5 Q8.5 -2.6 16.2 5.5 Q8.5 13.6 0.8 5.5 Z" fill="none" stroke="#fff" stroke-width="2.1" stroke-linejoin="round"/><circle cx="8.5" cy="5.4" r="2.4" fill="#fff"/></svg>
<svg class="a" style="left:966.7px;top:530.65px;" width="14" height="17" viewBox="0 0 14 17"><path d="M3.2 8 V5.3 a3.65 3.65 0 0 1 7.3 0 V8" fill="none" stroke="#1b1e25" stroke-width="1.9"/><rect x="0.4" y="7.65" width="12.7" height="10" rx="1.5" fill="#1b1e25"/><circle cx="6.75" cy="10.9" r="1.4" fill="#19a1e6"/><path d="M6.2 11 H7.3 L7.9 15.4 H5.6 Z" fill="#19a1e6"/></svg>
<div class="a" style="left:532px;top:688px;width:466px;height:8px;background:linear-gradient(rgba(0,0,0,0),rgba(0,0,0,0.0));border-radius:0px;"></div>

</body></html>
